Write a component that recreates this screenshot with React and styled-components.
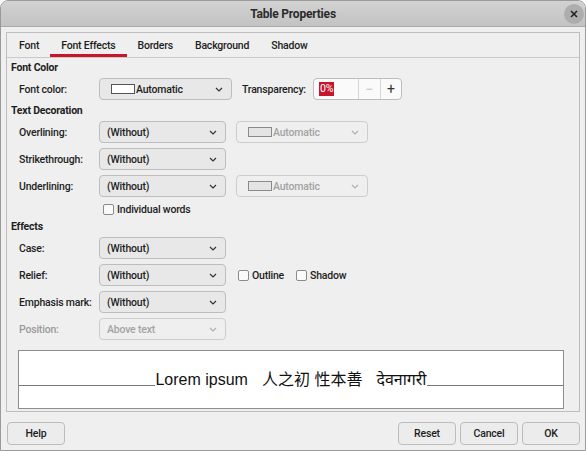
import React from 'react';
import styled, { createGlobalStyle } from 'styled-components';

const GlobalStyle = createGlobalStyle`
  body {
    margin: 0;
    font-family: Roboto, "Noto Sans", "Noto Sans CJK SC", sans-serif;
    font-size: 10.5px;
    letter-spacing: -0.2px;
    color: #1e1e1e;
  }
`;

const Window = styled.div`
  width: 586px;
  height: 451px;
  box-sizing: border-box;
  border: 1px solid #9a9a9a;
  border-radius: 8px 8px 0 0;
  background: #efefef;
  display: flex;
  flex-direction: column;
  overflow: hidden;
`;

const TitleBar = styled.div`
  position: relative;
  height: 25px;
  flex: none;
  display: flex;
  align-items: center;
  justify-content: center;
  background: linear-gradient(#d2d2d2, #c3c3c3);
  border-bottom: 1px solid #aaaaaa;
  font-weight: 700;
  font-size: 12px;
  color: #2b2b2b;
`;

const CloseButton = styled.div`
  position: absolute;
  right: 1px;
  top: 3px;
  width: 20px;
  height: 20px;
  border-radius: 50%;
  background: #adadad;
  display: flex;
  align-items: center;
  justify-content: center;
`;

const Main = styled.div`
  flex: 1;
  display: flex;
  flex-direction: column;
  padding: 5px 5px 0;
`;

const Notebook = styled.div`
  height: 380px;
  box-sizing: border-box;
  border: 1px solid #bdbdbd;
  display: flex;
  flex-direction: column;
`;

const TabBar = styled.div`
  height: 24px;
  display: flex;
  padding-left: 1px;
  border-bottom: 1px solid #c9c9c9;
`;

const Tab = styled.div`
  padding: 0 11px;
  display: flex;
  align-items: center;
  font-weight: 500;
  box-sizing: border-box;
  border-bottom: 3px solid ${(p) => (p.$active ? '#c7162b' : 'transparent')};
  border-top: 3px solid transparent;
`;

const Content = styled.div`
  flex: 1;
  display: flex;
  flex-direction: column;
  gap: 5px;
  padding: 4px 4px 0;
`;

const Heading = styled.div`
  height: 11px;
  line-height: 11px;
  font-weight: 700;
`;

const Row = styled.div`
  display: flex;
  align-items: center;
  height: ${(p) => p.$h || 22}px;
  padding-left: 8px;
`;

const Label = styled.div`
  width: ${(p) => p.$w || 80}px;
  flex: none;
  font-weight: 500;
  color: ${(p) => (p.$disabled ? '#9a9a9a' : '#1e1e1e')};
`;

const Select = styled.div`
  width: ${(p) => p.$w || 127}px;
  height: 22px;
  box-sizing: border-box;
  flex: none;
  display: flex;
  align-items: center;
  padding: 0 8px 0 ${(p) => (p.$swatch ? 11 : 7)}px;
  margin-right: ${(p) => p.$mr || 0}px;
  border: 1px solid ${(p) => (p.$disabled ? '#cdcdcd' : '#bdbdbd')};
  border-radius: 4px;
  background: ${(p) => (p.$disabled ? '#efefef' : '#e8e8e8')};
  color: ${(p) => (p.$disabled ? '#a3a3a3' : '#1e1e1e')};
  font-weight: 500;
`;

const SelectText = styled.span`
  flex: 1;
`;

const Swatch = styled.span`
  width: 24px;
  height: 10px;
  box-sizing: border-box;
  border: 1px solid ${(p) => (p.$disabled ? '#8a8a8a' : '#555')};
  background: ${(p) => (p.$disabled ? '#e4e4e4' : '#fff')};
  margin-right: 1px;
  flex: none;
`;

const Spin = styled.div`
  width: 89px;
  height: 22px;
  box-sizing: border-box;
  margin-left: 9px;
  display: flex;
  border: 1px solid #bdbdbd;
  border-radius: 4px;
  background: #fafafa;
  overflow: hidden;
`;

const SpinEntry = styled.div`
  width: 39px;
  display: flex;
  align-items: center;
  padding-left: 5px;
`;

const Selected = styled.span`
  background: #c7162b;
  color: #fff;
  padding: 1px 1px;
  line-height: 12px;
`;

const SpinButton = styled.div`
  flex: 1;
  display: flex;
  align-items: center;
  justify-content: center;
  border-left: 1px solid #d6d6d6;
  color: ${(p) => (p.$disabled ? '#c4c4c4' : '#333')};
  font-size: 14px;
`;

const Check = styled.label`
  display: flex;
  align-items: center;
  gap: 3px;
  margin-left: ${(p) => p.$ml || 0}px;
  font-weight: 500;
`;

const Box = styled.span`
  width: 11px;
  height: 11px;
  box-sizing: border-box;
  border: 1px solid #8a8a8a;
  border-radius: 2px;
  background: #fafafa;
`;

const Preview = styled.div`
  margin: 5px 11px 0 7px;
  height: 59px;
  box-sizing: border-box;
  border: 1px solid #8d8d8d;
  background: #fff;
  display: flex;
  align-items: flex-end;
  padding-bottom: 20px;
`;

const Line = styled.div`
  flex: 1;
  border-bottom: 1px solid #777;
  margin-bottom: 2px;
`;

const Sample = styled.div`
  font-family: "Liberation Sans", "Noto Sans CJK SC", "Noto Sans", sans-serif;
  font-size: 16px;
  line-height: 16px;
  letter-spacing: 0;
  color: #111;
  white-space: pre;
  display: flex;
  gap: 14px;
`;

const Footer = styled.div`
  display: flex;
  align-items: center;
  gap: 4px;
  padding: 10px 0 0 1px;
`;

const Button = styled.button`
  width: 58px;
  height: 23px;
  border: 1px solid #bcbcbc;
  border-radius: 4px;
  background: #ececec;
  font-family: inherit;
  font-size: 10.5px;
  letter-spacing: -0.2px;
  font-weight: 500;
  color: #1e1e1e;
  ${(p) => p.$push && 'margin-left: auto;'}
`;

const Chevron = ({ disabled }) => (
  <svg width="8" height="5" viewBox="0 0 8 5">
    <path d="M1 1 L4 4 L7 1" fill="none" stroke={disabled ? '#b0b0b0' : '#333'} strokeWidth="1.2" />
  </svg>
);

const Dropdown = ({ text, w, disabled, swatch, mr }) => (
  <Select $w={w} $disabled={disabled} $swatch={swatch} $mr={mr}>
    {swatch && <Swatch $disabled={disabled} />}
    <SelectText>{text}</SelectText>
    <Chevron disabled={disabled} />
  </Select>
);

const tabs = ['Font', 'Font Effects', 'Borders', 'Background', 'Shadow'];

const App = () => (
  <>
    <GlobalStyle />
    <Window>
      <TitleBar>
        Table Properties
        <CloseButton>
          <svg width="8" height="8" viewBox="0 0 8 8">
            <path d="M1 1 L7 7 M7 1 L1 7" stroke="#222" strokeWidth="1.6" />
          </svg>
        </CloseButton>
      </TitleBar>
      <Main>
        <Notebook>
          <TabBar>
            {tabs.map((t) => (
              <Tab key={t} $active={t === 'Font Effects'}>{t}</Tab>
            ))}
          </TabBar>
          <Content>
            <Heading>Font Color</Heading>
            <Row>
              <Label>Font color:</Label>
              <Dropdown text="Automatic" w={133} swatch mr={10} />
              <Label $w={62}>Transparency:</Label>
              <Spin>
                <SpinEntry><Selected>0%</Selected></SpinEntry>
                <SpinButton $disabled>−</SpinButton>
                <SpinButton>+</SpinButton>
              </Spin>
            </Row>
            <Heading>Text Decoration</Heading>
            <Row>
              <Label>Overlining:</Label>
              <Dropdown text="(Without)" mr={10} />
              <Dropdown text="Automatic" w={132} swatch disabled />
            </Row>
            <Row>
              <Label>Strikethrough:</Label>
              <Dropdown text="(Without)" />
            </Row>
            <Row>
              <Label>Underlining:</Label>
              <Dropdown text="(Without)" mr={10} />
              <Dropdown text="Automatic" w={132} swatch disabled />
            </Row>
            <Row $h={14}>
              <Label $w={84} />
              <Check><Box />Individual words</Check>
            </Row>
            <Heading>Effects</Heading>
            <Row>
              <Label>Case:</Label>
              <Dropdown text="(Without)" />
            </Row>
            <Row>
              <Label>Relief:</Label>
              <Dropdown text="(Without)" />
              <Check $ml={12}><Box />Outline</Check>
              <Check $ml={12}><Box />Shadow</Check>
            </Row>
            <Row>
              <Label>Emphasis mark:</Label>
              <Dropdown text="(Without)" />
            </Row>
            <Row>
              <Label $disabled>Position:</Label>
              <Dropdown text="Above text" disabled />
            </Row>
            <Preview>
              <Line />
              <Sample>
                <span>Lorem ipsum</span>
                <span>人之初 性本善</span>
                <span>देवनागरी</span>
              </Sample>
              <Line />
            </Preview>
          </Content>
        </Notebook>
        <Footer>
          <Button>Help</Button>
          <Button $push>Reset</Button>
          <Button>Cancel</Button>
          <Button>OK</Button>
        </Footer>
      </Main>
    </Window>
  </>
);

export default App;
